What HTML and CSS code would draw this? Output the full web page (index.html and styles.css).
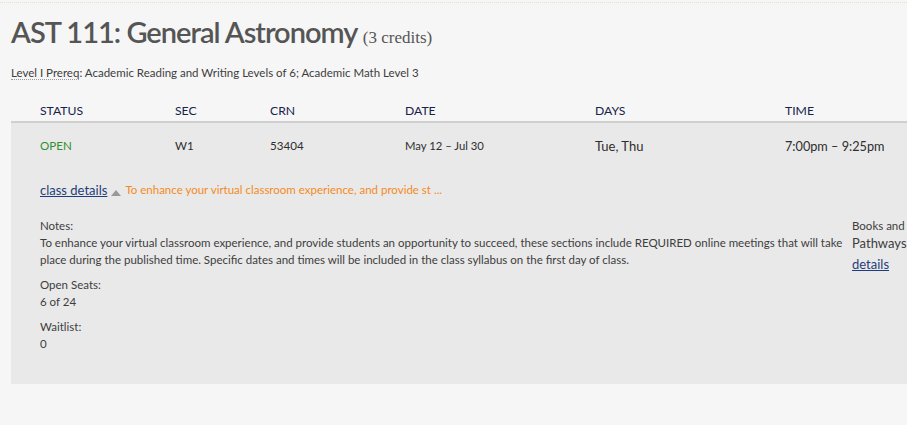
FILE: index.html
```html
<!DOCTYPE html>
<html>
<head>
<meta charset="utf-8">
<link rel="stylesheet" href="styles.css">
</head>
<body>
<div class="topline"></div>
<div class="course">
  <h1 class="title">AST 111: General Astronomy <span class="credits">(3 credits)</span></h1>
  <p class="prereq"><abbr class="lvl">Level I Prereq</abbr>: Academic Reading and Writing Levels of 6; Academic Math Level 3</p>
  <div class="sections">
    <div class="grid head">
      <div>STATUS</div><div>SEC</div><div>CRN</div><div>DATE</div><div>DAYS</div><div>TIME</div>
    </div>
    <div class="box">
      <div class="grid row">
        <div class="open">OPEN</div><div>W1</div><div>53404</div><div class="date">May 12 – Jul 30</div><div class="big">Tue, Thu</div><div class="big">7:00pm – 9:25pm</div>
      </div>
      <div class="toggle">
        <a href="#" class="link">class details</a><span class="tri"></span><span class="teaser">To enhance your virtual classroom experience, and provide st ...</span>
      </div>
      <div class="details">
        <div class="main">
          <div class="field">
            <div>Notes:</div>
            <div>To enhance your virtual classroom experience, and provide students an opportunity to succeed, these sections include REQUIRED online meetings that will take place during the published time. Specific dates and times will be included in the class syllabus on the first day of class.</div>
          </div>
          <div class="field">
            <div>Open Seats:</div>
            <div>6 of 24</div>
          </div>
          <div class="field">
            <div>Waitlist:</div>
            <div>0</div>
          </div>
        </div>
        <div class="side">
          <div class="books">Books and</div>
          <div class="path">Pathways</div>
          <a href="#" class="link">details</a>
        </div>
      </div>
    </div>
  </div>
</div>
</body>
</html>
```
FILE: styles.css
```css
html, body {
  margin: 0;
  padding: 0;
  background: #f6f6f6;
  font-family: Lato, "Liberation Sans", sans-serif;
  color: #3d3d3d;
  overflow: hidden;
}
.topline {
  height: 0;
  border-top: 1px dotted #e4e2c4;
  margin-top: 2px;
}
.course {
  padding-left: 11px;
}
.title {
  margin: 11px 0 0 0;
  font-size: 29px;
  font-weight: 600;
  letter-spacing: -1px;
  color: #555;
  line-height: 36px;
}
.credits {
  font-family: "Liberation Serif", "DejaVu Serif", serif;
  font-size: 17px;
  font-weight: 400;
  letter-spacing: 0;
  color: #555;
}
.prereq {
  margin: 9px 0 0 0;
  font-size: 11.5px;
  line-height: 16px;
  color: #3d3d3d;
}
.lvl {
  text-decoration: none;
  border-bottom: 1px dotted #999;
}
.sections {
  margin-top: 22px;
}
.grid {
  display: grid;
  grid-template-columns: 135px 95px 135px 190px 190px 1fr;
  padding-left: 29px;
}
.head {
  font-size: 12.2px;
  color: #16234a;
  line-height: 16px;
  padding-bottom: 2px;
  border-bottom: 2px solid #cfcfcf;
}
.box {
  background: #e9e9e9;
  height: 261px;
}
.row {
  font-size: 11.6px;
  color: #2e2e2e;
  padding-top: 15px;
  line-height: 16px;
  align-items: center;
}
.date {
  font-size: 11.3px;
}
.big {
  font-size: 13px;
}
.big:last-child {
  font-size: 12.7px;
}
.open {
  color: #2f8f2f;
}
.toggle {
  padding-left: 29px;
  margin-top: 27px;
  display: flex;
  align-items: center;
  font-size: 13px;
  line-height: 18px;
}
.link {
  color: #1f3d7a;
  text-decoration: underline;
}
.tri {
  width: 0;
  height: 0;
  border-left: 5px solid transparent;
  border-right: 5px solid transparent;
  border-bottom: 6px solid #999;
  margin: 5px 4px 0 4px;
}
.teaser {
  font-size: 11.5px;
  color: #f58a24;
}
.details {
  display: flex;
  padding-left: 29px;
  margin-top: 18px;
  font-size: 11.5px;
  line-height: 17px;
  color: #3d3d3d;
}
.main {
  width: 803px;
  flex-shrink: 0;
}
.field {
  margin-bottom: 8px;
}
.side {
  margin-left: 9px;
  white-space: nowrap;
}
.books {
  font-size: 11.5px;
}
.path {
  font-size: 13px;
  line-height: 19px;
}
.side .link {
  display: inline-block;
  margin-top: 3px;
  font-size: 13px;
}
```
